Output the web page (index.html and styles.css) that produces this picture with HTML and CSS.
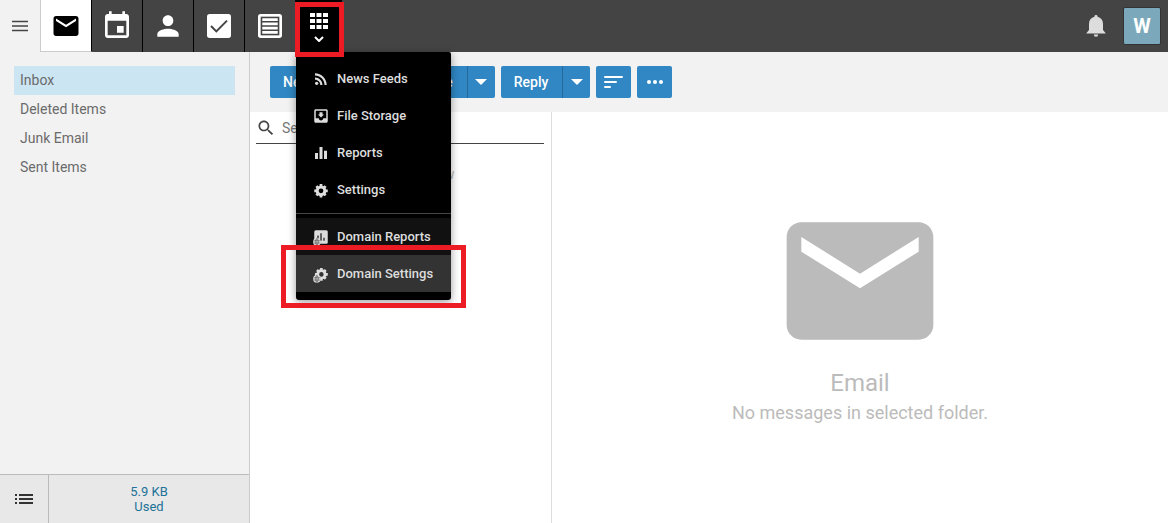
FILE: index.html
```html
<!DOCTYPE html>
<html lang="en">
<head>
    <meta charset="UTF-8">
    <meta name="viewport" content="width=device-width, initial-scale=1.0">
    <title>Inbox - Email</title>
    <link rel="stylesheet" href="styles.css">
</head>
<body>
    <!-- Shared icons -->
    <svg class="sprite" aria-hidden="true">
        <symbol id="i-mail" viewBox="0 0 24 24"><path d="M20 4H4c-1.1 0-2 .9-2 2v12c0 1.1.9 2 2 2h16c1.1 0 2-.9 2-2V6c0-1.1-.9-2-2-2zm0 4l-8 5-8-5V6l8 5 8-5v2z"/></symbol>
        <symbol id="i-caret" viewBox="0 0 12 6"><path d="M0 0h12L6 6z"/></symbol>
        <symbol id="i-gear" viewBox="0 0 24 24"><circle cx="12" cy="12" r="6.200" fill="none" stroke="currentColor" stroke-width="4.800"/><path d="M12 1.200v4M12 18.800v4M1.200 12h4M18.800 12h4M4.600 4.600l2.800 2.800M16.600 16.600l2.800 2.800M19.400 4.600l-2.800 2.800M7.400 16.600l-2.800 2.800" stroke="currentColor" stroke-width="4.400"/></symbol>
        <symbol id="i-globe" viewBox="0 0 12 12"><circle cx="6" cy="6" r="5.500"/><path d="M1 4.300h10M1 7.700h10M6 1v10M6 1c-3 3-3 7 0 10M6 1c3 3 3 7 0 10" fill="none" stroke="#222" stroke-width=".6"/></symbol>
    </svg>

    <header class="topbar">
        <button class="menu-toggle" aria-label="Toggle sidebar">
            <svg width="16" height="12" viewBox="0 0 16 12"><path d="M0 1.500h16M0 6h16M0 10.500h16" stroke="#444" stroke-width="1.500"/></svg>
        </button>
        <nav class="tabs">
            <button class="tab tab-active" aria-label="Email"><svg width="30" height="30"><use href="#i-mail"/></svg></button>
            <button class="tab" aria-label="Calendar">
                <svg width="32" height="32" viewBox="0 0 24 24"><path d="M17 12h-5v5h5v-5zM16 1v2H8V1H6v2H5c-1.110 0-1.990.9-1.990 2L3 19c0 1.100.89 2 2 2h14c1.100 0 2-.9 2-2V5c0-1.100-.9-2-2-2h-1V1h-2zm3 18H5V8h14v11z"/></svg>
            </button>
            <button class="tab" aria-label="Contacts">
                <svg width="32" height="32" viewBox="0 0 24 24"><path d="M12 12c2.210 0 4-1.790 4-4s-1.790-4-4-4-4 1.790-4 4 1.790 4 4 4zm0 2c-2.670 0-8 1.340-8 4v2h16v-2c0-2.660-5.330-4-8-4z"/></svg>
            </button>
            <button class="tab" aria-label="Tasks">
                <svg width="32" height="32" viewBox="0 0 24 24"><rect x="3" y="3" width="18" height="18" rx="2"/><path d="M6 12l4 4 8-8" fill="none" stroke="#444" stroke-width="1.500"/></svg>
            </button>
            <button class="tab" aria-label="Notes">
                <svg width="32" height="32" viewBox="0 0 24 24"><rect x="3" y="3" width="18" height="18" rx="2"/><path d="M5 5h14v14H5z" fill="#444"/><path d="M6.200 7.200h11.600M6.200 10.400h11.600M6.200 13.600h11.600M6.200 16.800h11.600" stroke="#fff" stroke-width="2"/></svg>
            </button>
            <div class="apps">
                <button class="tab tab-apps" aria-label="More apps" aria-expanded="true">
                    <svg width="18" height="16" viewBox="0 0 18 16"><path d="M0 0h5v4H0zM6.500 0h5v4h-5zM13 0h5v4h-5zM0 6h5v4H0zM6.500 6h5v4h-5zM13 6h5v4h-5zM0 12h5v4H0zM6.500 12h5v4h-5zM13 12h5v4h-5z"/></svg>
                    <svg width="10" height="6" viewBox="0 0 10 6"><path d="M1 1l4 4 4-4" fill="none" stroke="#fff" stroke-width="2"/></svg>
                </button>
                <div class="marker marker-apps"></div>
                <div class="dropdown">
                    <a class="item" href="#">
                        <svg width="18" height="18" viewBox="0 0 24 24"><circle cx="6.180" cy="17.820" r="2.180"/><path d="M4 4.440v2.830c7.030 0 12.730 5.700 12.730 12.730h2.830c0-8.590-6.970-15.560-15.560-15.560zm0 5.660v2.830c3.900 0 7.070 3.170 7.070 7.070h2.830c0-5.470-4.430-9.900-9.900-9.900z"/></svg>
                        News Feeds
                    </a>
                    <a class="item" href="#">
                        <svg width="18" height="18" viewBox="0 0 24 24"><path d="M19 3H5c-1.100 0-2 .9-2 2v14c0 1.100.9 2 2 2h14c1.100 0 2-.9 2-2V5c0-1.100-.9-2-2-2zm0 12h-4c0 1.660-1.350 3-3 3s-3-1.340-3-3H5V5h14v10zm-3-5h-2V7h-4v3H8l4 4 4-4z"/></svg>
                        File Storage
                    </a>
                    <a class="item" href="#">
                        <svg width="18" height="18" viewBox="0 0 24 24"><path d="M10 20h4V4h-4v16zm-6 0h4v-8H4v8zM16 9v11h4V9h-4z"/></svg>
                        Reports
                    </a>
                    <a class="item" href="#">
                        <svg width="18" height="18" viewBox="0 0 24 24"><use href="#i-gear" x="2" y="3" width="20" height="20"/></svg>
                        Settings
                    </a>
                    <hr class="divider">
                    <a class="item item-domain" href="#">
                        <svg width="18" height="18" viewBox="0 0 24 24"><path d="M5 3h14a2 2 0 0 1 2 2v14a2 2 0 0 1-2 2H5a2 2 0 0 1-2-2V5a2 2 0 0 1 2-2z"/><path d="M8 10v7M12 7v10M16 13v4" stroke="#111" stroke-width="1.600"/><use href="#i-globe" x="1" y="13" width="11" height="11"/></svg>
                        Domain Reports
                    </a>
                    <a class="item item-current" href="#">
                        <svg width="18" height="18" viewBox="0 0 24 24"><use href="#i-gear" x="3" y="3" width="19" height="19"/><use href="#i-globe" x="1" y="13" width="11" height="11"/></svg>
                        Domain Settings
                    </a>
                    <div class="marker marker-domain"></div>
                </div>
            </div>
        </nav>
        <div class="account">
            <button class="bell" aria-label="Notifications">
                <svg width="20" height="22" viewBox="0 0 20 22"><path d="M10 0a1.500 1.500 0 0 0-1.500 1.700C5 2.500 3 5 3 9v6l-2.500 3v.5h19V18L17 15V9c0-4-2-6.500-5.500-7.300A1.500 1.500 0 0 0 10 0zM7.800 19.500a2.200 2.200 0 0 0 4.400 0z"/></svg>
            </button>
            <button class="avatar">W</button>
        </div>
    </header>

    <div class="layout">
        <aside class="sidebar">
            <nav class="folders">
                <a class="folder folder-active" href="#">Inbox</a>
                <a class="folder" href="#">Deleted Items</a>
                <a class="folder" href="#">Junk Email</a>
                <a class="folder" href="#">Sent Items</a>
            </nav>
            <div class="sidebar-footer">
                <button class="list-toggle" aria-label="Folder options">
                    <svg width="18" height="10" viewBox="0 0 18 10"><path d="M0 1h2M4 1h14M0 5h2M4 5h14M0 9h2M4 9h14" stroke="#333" stroke-width="2"/></svg>
                </button>
                <a class="usage" href="#">5.9 KB<br>Used</a>
            </div>
        </aside>

        <main class="main">
            <div class="toolbar">
                <div class="btn-group">
                    <button class="btn">New</button>
                    <button class="btn btn-caret" aria-label="New options"><svg width="12" height="6"><use href="#i-caret"/></svg></button>
                </div>
                <button class="btn btn-icon" aria-label="Settings"><svg width="18" height="18"><use href="#i-gear"/></svg></button>
                <div class="btn-group">
                    <button class="btn">Delete</button>
                    <button class="btn btn-caret" aria-label="Delete options"><svg width="12" height="6"><use href="#i-caret"/></svg></button>
                </div>
                <div class="btn-group">
                    <button class="btn">Reply</button>
                    <button class="btn btn-caret" aria-label="Reply options"><svg width="12" height="6"><use href="#i-caret"/></svg></button>
                </div>
                <button class="btn btn-icon" aria-label="Sort">
                    <svg width="19" height="12" viewBox="0 0 19 12"><path d="M1 1h17M1 6h11M1 11h5" stroke="#fff" stroke-width="2" stroke-linecap="round"/></svg>
                </button>
                <button class="btn btn-icon" aria-label="More">
                    <svg width="16" height="4" viewBox="0 0 16 4"><circle cx="2" cy="2" r="2"/><circle cx="8" cy="2" r="2"/><circle cx="14" cy="2" r="2"/></svg>
                </button>
            </div>
            <div class="content">
                <section class="messages">
                    <label class="search">
                        <svg width="20" height="20" viewBox="0 0 24 24"><path d="M15.500 14h-.79l-.28-.27C15.410 12.590 16 11.110 16 9.500 16 5.910 13.090 3 9.500 3S3 5.910 3 9.500 5.910 16 9.500 16c1.610 0 3.090-.59 4.230-1.570l.27.28v.79l5 4.990L20.490 19l-4.990-5zm-6 0C7.010 14 5 11.990 5 9.500S7.010 5 9.500 5 14 7.010 14 9.500 11.990 14 9.500 14z"/></svg>
                        <input type="text" placeholder="Search" aria-label="Search">
                    </label>
                    <p class="no-items">No items to show</p>
                </section>
                <section class="preview">
                    <svg width="176" height="176"><use href="#i-mail"/></svg>
                    <h1>Email</h1>
                    <p>No messages in selected folder.</p>
                </section>
            </div>
        </main>
    </div>
</body>
</html>
```
FILE: styles.css
```css
* {
    box-sizing: border-box;
}
body {
    margin: 0;
    height: 100vh;
    display: flex;
    flex-direction: column;
    font-family: Roboto, "Liberation Sans", sans-serif;
    font-size: 14px;
    color: #6b6b6b;
    background: #fff;
}
button {
    border: none;
    padding: 0;
    font-family: inherit;
    cursor: pointer;
    display: flex;
    align-items: center;
    justify-content: center;
}
a {
    color: inherit;
    text-decoration: none;
}
svg {
    flex: none;
    fill: currentColor;
}
.sprite {
    position: absolute;
    width: 0;
    height: 0;
}

/* Top bar */
.topbar {
    display: flex;
    height: 52px;
    flex: none;
    background: #444;
}
.menu-toggle {
    width: 40px;
    background: #f2f2f2;
}
.tabs {
    display: flex;
}
.tab {
    width: 51px;
    height: 100%;
    background: #444;
    color: #fff;
    border-right: 1px solid #000;
}
.tab-active {
    width: 52px;
    background: #fff;
    color: #000;
    border-left: 1px solid #ccc;
    border-bottom: 1px solid #ccc;
}
.apps {
    position: relative;
}
.tab-apps {
    width: 46px;
    flex-direction: column;
    gap: 7px;
    padding-top: 2px;
    border: none;
    background: #000;
}
.dropdown {
    position: absolute;
    z-index: 2;
    top: 100%;
    left: 0;
    padding: 8px 0;
    background: #000;
    border-radius: 0 2px 3px 3px;
    box-shadow: 0 2px 8px rgba(0, 0, 0, 0.4);
}
.item {
    display: flex;
    align-items: center;
    gap: 7px;
    height: 37px;
    padding: 0 18px 0 16px;
    color: #ddd;
    font-size: 13px;
    font-weight: 500;
    white-space: nowrap;
}
.item-domain {
    background: #111;
}
.item-current {
    background: #333;
}
.divider {
    height: 1px;
    margin: 5px 0 4px;
    border: none;
    background: #444;
}
.marker {
    position: absolute;
    border: 5px solid #ed1c24;
    pointer-events: none;
}
.marker-apps {
    z-index: 3;
    top: 2px;
    left: -1px;
    right: -2px;
    bottom: -5px;
}
.marker-domain {
    left: -15px;
    right: -15px;
    bottom: -8px;
    height: 63px;
}
.account {
    display: flex;
    align-items: center;
    gap: 17px;
    margin-left: auto;
    padding-right: 7px;
}
.bell {
    background: none;
    color: #ddd;
}
.avatar {
    width: 38px;
    height: 38px;
    background: #7ba9bb;
    border: 1px solid #333;
    border-radius: 2px;
    color: #fff;
    font-size: 20px;
    font-weight: 700;
}

/* Sidebar */
.layout {
    display: flex;
    flex: 1;
    min-height: 0;
}
.sidebar {
    width: 250px;
    flex: none;
    display: flex;
    flex-direction: column;
    background: #f2f2f2;
    border-right: 1px solid #ccc;
}
.folders {
    flex: 1;
    padding: 14px;
}
.folder {
    display: block;
    padding: 0 6px;
    line-height: 29px;
}
.folder-active {
    background: #cce5f3;
}
.sidebar-footer {
    display: flex;
    height: 49px;
    background: #e8e8e8;
    border-top: 1px solid #bbb;
}
.list-toggle {
    width: 49px;
    background: none;
    border-right: 1px solid #bbb;
}
.usage {
    flex: 1;
    padding-top: 9px;
    color: #1c7298;
    font-size: 13px;
    line-height: 15px;
    text-align: center;
}

/* Toolbar */
.main {
    flex: 1;
    display: flex;
    flex-direction: column;
    min-width: 0;
}
.toolbar {
    display: flex;
    gap: 6px;
    padding: 14px 20px;
    background: #f2f2f2;
}
.btn-group {
    display: flex;
}
.btn {
    height: 32px;
    padding: 0 14px 0 13px;
    background: #3087c3;
    border-radius: 2px;
    color: #fff;
    font-size: 14px;
    font-weight: 500;
}
.btn-group .btn:first-child {
    border-radius: 2px 0 0 2px;
}
.btn-group .btn-caret {
    width: 28px;
    padding: 0;
    border-left: 1px solid #246a9b;
    border-radius: 0 2px 2px 0;
}
.btn-icon {
    width: 35px;
    padding: 0;
}

/* Message list and preview */
.content {
    flex: 1;
    display: flex;
}
.messages {
    width: 302px;
    padding: 0 7px 0 6px;
    border-right: 1px solid #ddd;
}
.search {
    display: flex;
    align-items: center;
    gap: 6px;
    height: 32px;
    border-bottom: 1px solid #444;
    color: #444;
}
.search input {
    flex: 1;
    min-width: 0;
    padding: 0;
    border: none;
    outline: none;
    font-family: inherit;
    font-size: 14px;
}
.search input::placeholder {
    color: #777;
}
.no-items {
    margin: 22px 0 0;
    color: #bbb;
    text-align: center;
}
.preview {
    flex: 1;
    display: flex;
    flex-direction: column;
    align-items: center;
    justify-content: center;
    padding-bottom: 14px;
    color: #bbb;
}
.preview h1 {
    margin: 0;
    font-size: 24px;
    font-weight: 400;
    line-height: 28px;
}
.preview p {
    margin: 0;
    font-size: 18px;
    line-height: 32px;
}
```
